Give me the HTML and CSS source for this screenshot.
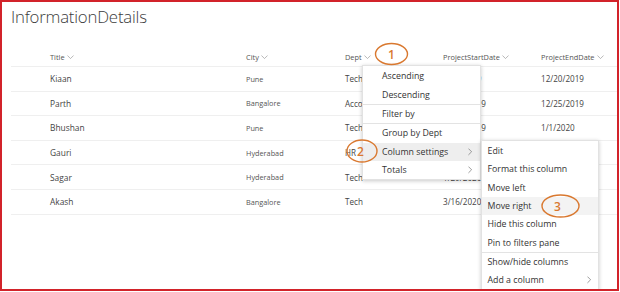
FILE: index.html
```html
<!DOCTYPE html>
<html lang="en">
<head>
    <meta charset="UTF-8">
    <meta name="viewport" content="width=device-width, initial-scale=1.0">
    <title>InformationDetails</title>
    <link rel="stylesheet" href="styles.css">
</head>
<body>
    <div class="frame">
        <h1 class="list-title">InformationDetails</h1>

        <div class="list">
            <div class="row head">
                <div class="cell first">Title <svg class="down" viewBox="0 0 8 5"><path d="M0.5 0.5 L4 4 L7.5 0.5"/></svg></div>
                <div class="cell">City <svg class="down" viewBox="0 0 8 5"><path d="M0.5 0.5 L4 4 L7.5 0.5"/></svg></div>
                <div class="cell">Dept <svg class="down" viewBox="0 0 8 5"><path d="M0.5 0.5 L4 4 L7.5 0.5"/></svg></div>
                <div class="cell">ProjectStartDate <svg class="down" viewBox="0 0 8 5"><path d="M0.5 0.5 L4 4 L7.5 0.5"/></svg></div>
                <div class="cell">ProjectEndDate <svg class="down" viewBox="0 0 8 5"><path d="M0.5 0.5 L4 4 L7.5 0.5"/></svg></div>
            </div>
            <div class="row">
                <div class="cell first name">Kiaan</div>
                <div class="cell city">Pune</div>
                <div class="cell">Tech</div>
                <div class="cell">12/1/2019</div>
                <div class="cell">12/20/2019</div>
            </div>
            <div class="row">
                <div class="cell first name">Parth</div>
                <div class="cell city">Bangalore</div>
                <div class="cell">Accounts</div>
                <div class="cell">12/15/2019</div>
                <div class="cell">12/25/2019</div>
            </div>
            <div class="row">
                <div class="cell first name">Bhushan</div>
                <div class="cell city">Pune</div>
                <div class="cell">Tech</div>
                <div class="cell">12/20/2019</div>
                <div class="cell">1/1/2020</div>
            </div>
            <div class="row">
                <div class="cell first name">Gauri</div>
                <div class="cell city">Hyderabad</div>
                <div class="cell">HR</div>
                <div class="cell">1/10/2020</div>
                <div class="cell">1/20/2020</div>
            </div>
            <div class="row">
                <div class="cell first name">Sagar</div>
                <div class="cell city">Hyderabad</div>
                <div class="cell">Tech</div>
                <div class="cell">1/29/2020</div>
                <div class="cell">2/10/2020</div>
            </div>
            <div class="row">
                <div class="cell first name">Akash</div>
                <div class="cell city">Bangalore</div>
                <div class="cell">Tech</div>
                <div class="cell">3/16/2020</div>
                <div class="cell">3/26/2020</div>
            </div>
        </div>

        <!-- column header menu -->
        <div class="menu col-menu">
            <div class="item">Ascending</div>
            <div class="item">Descending</div>
            <div class="sep"></div>
            <div class="item">Filter by</div>
            <div class="sep"></div>
            <div class="item">Group by Dept</div>
            <div class="item active">Column settings <svg class="more" viewBox="0 0 5 8"><path d="M0.5 0.5 L4 4 L0.5 7.5"/></svg></div>
            <div class="item">Totals <svg class="more" viewBox="0 0 5 8"><path d="M0.5 0.5 L4 4 L0.5 7.5"/></svg></div>
        </div>

        <!-- column settings submenu -->
        <div class="menu sub-menu">
            <div class="item">Edit</div>
            <div class="item">Format this column</div>
            <div class="item">Move left</div>
            <div class="item hover">Move right</div>
            <div class="item">Hide this column</div>
            <div class="item">Pin to filters pane</div>
            <div class="sep"></div>
            <div class="item">Show/hide columns</div>
            <div class="item">Add a column <svg class="more" viewBox="0 0 5 8"><path d="M0.5 0.5 L4 4 L0.5 7.5"/></svg></div>
        </div>

        <svg class="marks" viewBox="0 0 619 291">
            <ellipse cx="391.5" cy="54" rx="16" ry="10.5"/>
            <text x="388" y="58.5">1</text>
            <ellipse cx="362" cy="151" rx="15" ry="11"/>
            <text x="357" y="155.5">2</text>
            <ellipse cx="560.5" cy="206" rx="18.5" ry="11"/>
            <text x="554" y="210.5">3</text>
        </svg>
    </div>
</body>
</html>
```

FILE: styles.css
```css
*{
    margin: 0;
    padding: 0;
    box-sizing: border-box;
}
body{
    background-color: #fff;
    font-family: "Open Sans", "Noto Sans", sans-serif;
    color: #333;
}
.frame{
    position: relative;
    width: 619px;
    height: 291px;
    border: 2px solid #d2232a;
    overflow: hidden;
}
.list-title{
    margin: 4.5px 0 0 9px;
    font-size: 16.8px;
    font-weight: 300;
    line-height: 20px;
    letter-spacing: -0.2px;
    color: #3b3b3b;
}
.list{
    margin: 21.5px 0 0 9px;
}
.row{
    display: grid;
    grid-template-columns: 235px 99px 98px 98px 1fr;
    align-items: center;
    height: 24.6px;
    border-bottom: 1px solid #efefef;
    font-size: 8.1px;
    color: #444;
}
.row.head{
    height: 19px;
    font-size: 7.4px;
    color: #555;
}
.cell{
    display: flex;
    align-items: center;
    white-space: nowrap;
}
.cell.first{
    padding-left: 39px;
}
.name{
    font-size: 8.4px;
}
.city{
    font-size: 7.3px;
    color: #555;
}
.down{
    width: 7px;
    height: 4.5px;
    margin-left: 2.5px;
    fill: none;
    stroke: #999;
    stroke-width: 0.8;
}

.menu{
    position: absolute;
    background-color: #fff;
    border: 1px solid #e2e2e2;
    box-shadow: 0 1px 4px rgba(0, 0, 0, 0.22);
    font-size: 8.8px;
    color: #333;
}
.col-menu{
    left: 360px;
    top: 63px;
    width: 119px;
    padding-top: 1px;
}
.sub-menu{
    left: 479px;
    top: 138px;
    width: 118px;
    padding-top: 1px;
}
.item{
    display: flex;
    align-items: center;
    justify-content: space-between;
    height: 18.4px;
    padding: 0 8px 0 19px;
    white-space: nowrap;
}
.sub-menu .item{
    height: 18.3px;
    padding: 0 7px 0 5.5px;
}
.item.active{
    background-color: #eeeeee;
}
.item.hover{
    background-color: #f3f3f3;
}
.sep{
    height: 1px;
    background-color: #e3e3e3;
}
.more{
    width: 4.5px;
    height: 7.5px;
    fill: none;
    stroke: #777;
    stroke-width: 0.8;
}

.marks{
    position: absolute;
    left: -2px;
    top: -2px;
    width: 619px;
    height: 291px;
    pointer-events: none;
}
.marks ellipse{
    fill: none;
    stroke: #d9782f;
    stroke-width: 1.4;
}
.marks text{
    font-family: "Open Sans", sans-serif;
    font-size: 12px;
    font-weight: 600;
    fill: #d9782f;
}
```
